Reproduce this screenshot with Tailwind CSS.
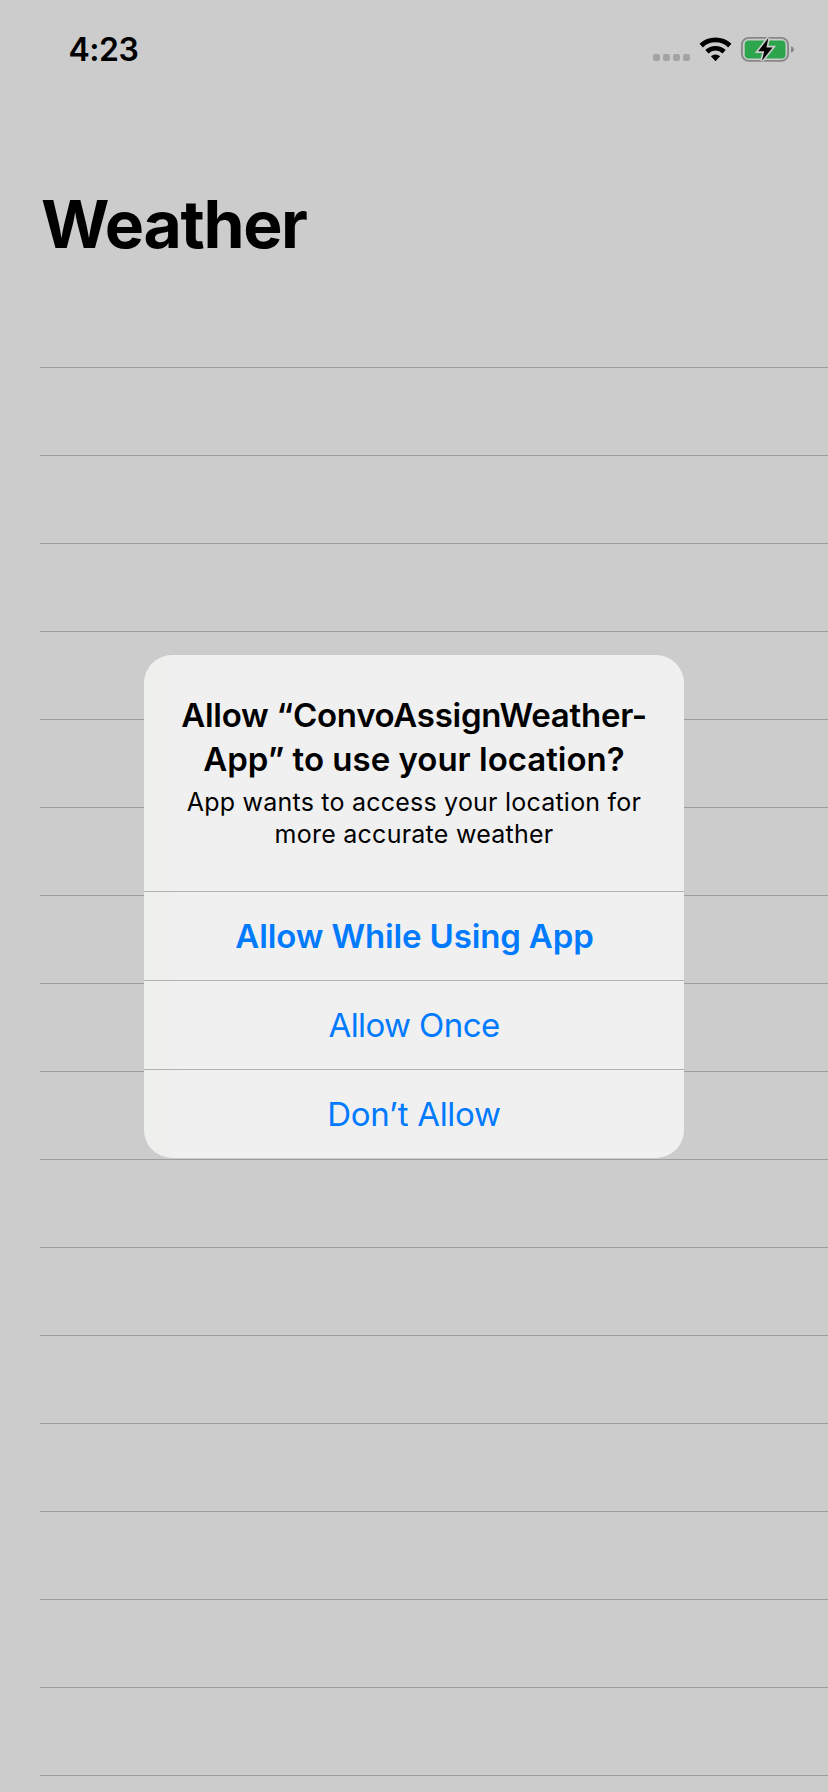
<!DOCTYPE html>
<html lang="en">
<head>
<meta charset="utf-8">
<title>Weather</title>
<script src="https://cdn.jsdelivr.net/npm/@tailwindcss/browser@4"></script>
</head>
<body class="bg-[#cccccc] font-['Inter',sans-serif] text-black">
<div class="relative flex h-[1792px] w-[828px] flex-col overflow-hidden">
  <!-- Status bar -->
  <header class="flex h-[100px] shrink-0 items-start justify-between pl-[68.5px] pr-[32px]">
    <span class="mt-[30px] text-[32px] leading-[39px] font-semibold tracking-[-0.5px]">4:23</span>
    <div class="mt-[36px] flex h-[26px] items-end">
      <div class="mb-px mr-[9px] flex gap-[3px]">
        <i class="size-[7px] rounded-[2px] bg-[#a3a3a3]"></i>
        <i class="size-[7px] rounded-[2px] bg-[#a3a3a3]"></i>
        <i class="size-[7px] rounded-[2px] bg-[#a3a3a3]"></i>
        <i class="size-[7px] rounded-[2px] bg-[#a3a3a3]"></i>
      </div>
      <svg class="mr-[8px]" width="33" height="26" viewBox="699 36 33 26" fill="none" stroke="#000">
        <path stroke-width="4.9" d="M701.2 45.6A20.8 20.8 0 0 1 729.8 45.6"/>
        <path stroke-width="4.7" d="M706.9 51.7A12.5 12.5 0 0 1 724.1 51.7"/>
        <path stroke="none" fill="#000" d="M715.5 61.2L710.9 56.2A6.9 6.9 0 0 1 720.1 56.2Z"/>
      </svg>
      <svg width="56" height="26" viewBox="740 36 56 26" fill="none">
        <rect x="741.9" y="37.9" width="46.2" height="23" rx="6.8" stroke="#878787" stroke-width="1.9"/>
        <rect x="744.7" y="40.6" width="40.8" height="17.8" rx="4" fill="#2ca54c"/>
        <path d="M791 46.2Q794 47.2 794 49.5Q794 51.8 791 52.8Z" fill="#878787"/>
        <path d="M768.4 38L758.2 51.3H764.2L761.9 60.8L772.6 47.4H766.4Z" fill="#000" stroke="#cccccc" stroke-width="3.4" paint-order="stroke"/>
      </svg>
    </div>
  </header>

  <h1 class="h-[267px] shrink-0 pl-[41px] pt-[84px] text-[66px] leading-[80px] font-bold tracking-[-1.35px]">Weather</h1>

  <!-- Empty table rows -->
  <ul class="ml-[40px] flex flex-col">
    <li class="h-[88px] shrink-0 border-t border-[#9d9d9d]"></li>
    <li class="h-[88px] shrink-0 border-t border-[#9d9d9d]"></li>
    <li class="h-[88px] shrink-0 border-t border-[#9d9d9d]"></li>
    <li class="h-[88px] shrink-0 border-t border-[#9d9d9d]"></li>
    <li class="h-[88px] shrink-0 border-t border-[#9d9d9d]"></li>
    <li class="h-[88px] shrink-0 border-t border-[#9d9d9d]"></li>
    <li class="h-[88px] shrink-0 border-t border-[#9d9d9d]"></li>
    <li class="h-[88px] shrink-0 border-t border-[#9d9d9d]"></li>
    <li class="h-[88px] shrink-0 border-t border-[#9d9d9d]"></li>
    <li class="h-[88px] shrink-0 border-t border-[#9d9d9d]"></li>
    <li class="h-[88px] shrink-0 border-t border-[#9d9d9d]"></li>
    <li class="h-[88px] shrink-0 border-t border-[#9d9d9d]"></li>
    <li class="h-[88px] shrink-0 border-t border-[#9d9d9d]"></li>
    <li class="h-[88px] shrink-0 border-t border-[#9d9d9d]"></li>
    <li class="h-[88px] shrink-0 border-t border-[#9d9d9d]"></li>
    <li class="h-[88px] shrink-0 border-t border-[#9d9d9d]"></li>
    <li class="h-[88px] shrink-0 border-t border-[#9d9d9d]"></li>
  </ul>

  <!-- Permission dialog -->
  <div role="alertdialog" class="absolute left-[144px] top-[655px] flex w-[540px] flex-col overflow-hidden rounded-[28px] bg-linear-to-r from-[#eef0ed] via-[#f0f0f0] via-10% to-[#f0f0f0] text-center">
    <div class="flex h-[236px] flex-col gap-[5px] pt-[38px]">
      <h2 class="text-[33px] leading-[44px] font-semibold whitespace-nowrap"><span class="block tracking-[-0.27px]">Allow “ConvoAssignWeather-</span><span class="block">App” to use your location?</span></h2>
      <p class="text-[25px] leading-[32px] whitespace-nowrap"><span class="block tracking-[0.22px]">App wants to access your location for</span><span class="block tracking-[0.25px]">more accurate weather</span></p>
    </div>
    <button class="h-[89px] border-t border-[#b0b0b0] pl-px text-[33px] leading-[88px] font-semibold tracking-[-0.14px] text-[#007aff]">Allow While Using App</button>
    <button class="h-[89px] border-t border-[#b0b0b0] text-[33px] leading-[88px] tracking-[-0.6px] text-[#007aff]">Allow Once</button>
    <button class="h-[89px] border-t border-[#b0b0b0] text-[33px] leading-[88px] tracking-[-0.3px] text-[#007aff]">Don’t Allow</button>
  </div>
</div>
</body>
</html>
